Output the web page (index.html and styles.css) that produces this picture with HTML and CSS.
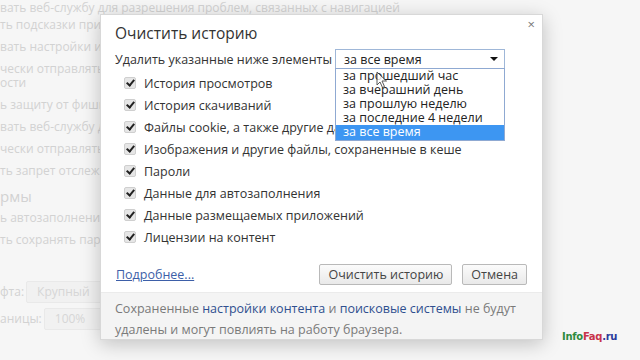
FILE: index.html
```html
<!DOCTYPE html>
<html lang="ru">

<head>
    <meta charset="UTF-8">
    <meta name="viewport" content="width=device-width, initial-scale=1.0">
    <title>Очистить историю</title>
    <link rel="stylesheet" href="styles.css">
</head>

<body>
    <!-- Settings page behind the overlay -->
    <div class="settings">
        <div class="set-line first">вать веб-службу для разрешения проблем, связанных с навигацией</div>
        <div class="set-line">ть подсказки при вводе</div>
        <div class="set-line">вать настройки и службы</div>
        <div class="set-line">чески отправлять статистику<br>ости</div>
        <div class="set-line">ь защиту от фишинга</div>
        <div class="set-line">вать веб-службу для</div>
        <div class="set-line">чески отправлять</div>
        <div class="set-line">ть запрет отслеживания</div>
        <div class="set-heading">рмы</div>
        <div class="set-line">ь автозаполнение</div>
        <div class="set-line">ть сохранять пароли</div>
        <div class="set-field first-field">
            <span>фта:</span>
            <span class="fake-select wide">Крупный</span>
        </div>
        <div class="set-field">
            <span>аницы:</span>
            <span class="fake-select">100%</span>
        </div>
    </div>

    <!-- Dialog -->
    <div class="dialog">
        <span class="close">&#215;</span>
        <div class="dialog-body">
            <h1>Очистить историю</h1>
            <div class="period-row">
                <span>Удалить указанные ниже элементы</span>
                <div class="period">
                    <div class="period-value">
                        <span>за все время</span>
                        <span class="arrow"></span>
                    </div>
                    <ul class="period-list">
                        <li>за прошедший час</li>
                        <li>за вчерашний день</li>
                        <li>за прошлую неделю</li>
                        <li>за последние 4 недели</li>
                        <li class="active">за все время</li>
                    </ul>
                </div>
            </div>

            <ul class="items">
                <li><span class="check"></span>История просмотров</li>
                <li><span class="check"></span>История скачиваний</li>
                <li><span class="check"></span>Файлы cookie, а также другие данные сайтов и плагинов</li>
                <li><span class="check"></span>Изображения и другие файлы, сохраненные в кеше</li>
                <li><span class="check"></span>Пароли</li>
                <li><span class="check"></span>Данные для автозаполнения</li>
                <li><span class="check"></span>Данные размещаемых приложений</li>
                <li><span class="check"></span>Лицензии на контент</li>
            </ul>

            <div class="actions">
                <a href="#" class="more">Подробнее...</a>
                <button class="btn">Очистить историю</button>
                <button class="btn">Отмена</button>
            </div>
        </div>
        <div class="dialog-footer">
            Сохраненные <a href="#">настройки контента</a> и <a href="#">поисковые системы</a> не будут
            удалены и могут повлиять на работу браузера.
        </div>
    </div>

    <!-- Mouse pointer -->
    <svg class="cursor" width="12" height="18" viewBox="0 0 12 18">
        <path d="M1 1 L1 14 L4 11 L6.5 16.5 L8.5 15.5 L6 10 L10.5 10 Z" fill="#fff" stroke="#333" stroke-width="1"
            stroke-linejoin="round" />
    </svg>

    <div class="watermark"><span class="wm-info">Info</span><span class="wm-faq">Faq</span><span class="wm-ru">.ru</span></div>
</body>

</html>
```

FILE: styles.css
```css
body {
    font-family: "Open Sans", "Noto Sans", sans-serif;
    background: #f6f6f6;
    margin: 0;
    padding: 0;
    width: 640px;
    height: 360px;
    overflow: hidden;
    position: relative;
}

/* Background settings page */
.settings {
    padding-top: 1px;
    color: #d2d2d2;
    font-size: 12px;
    line-height: 14px;
    white-space: nowrap;
}

.set-line {
    margin-bottom: 8px;
}

.set-line.first {
    margin-bottom: 3px;
}

.set-heading {
    font-size: 15px;
    line-height: 18px;
    margin-top: 9px;
    margin-bottom: 6px;
}

.set-field {
    display: flex;
    align-items: center;
    gap: 2px;
    height: 22px;
    margin-top: 5px;
}

.set-field.first-field {
    margin-top: 34px;
}

.fake-select {
    display: inline-block;
    width: 52px;
    height: 20px;
    line-height: 20px;
    padding-left: 10px;
    background: #f1f1f1;
    border: 1px solid #e9e9e9;
    border-radius: 2px;
    color: #d6d6d6;
}

.fake-select.wide {
    width: 70px;
}

/* Dialog */
.dialog {
    position: absolute;
    left: 100px;
    top: 14px;
    width: 443px;
    height: 326px;
    background: #fff;
    border: 1px solid #d8d8d8;
    box-sizing: border-box;
    box-shadow: 0 4px 18px rgba(0, 0, 0, 0.22);
    display: flex;
    flex-direction: column;
    color: #333;
}

.close {
    position: absolute;
    right: 7px;
    top: 0;
    font-size: 13px;
    color: #777;
}

.dialog-body {
    flex: 1;
    padding: 8px 15px 0 14px;
}

h1 {
    margin: 0;
    font-size: 15.5px;
    font-weight: normal;
    line-height: 20px;
    color: #333;
}

.period-row {
    display: flex;
    align-items: center;
    margin-top: 6px;
    font-size: 12.5px;
    height: 20px;
}

.period {
    position: relative;
    margin-left: auto;
    margin-right: 22px;
    width: 170px;
}

.period-value {
    display: flex;
    align-items: center;
    justify-content: space-between;
    height: 20px;
    box-sizing: border-box;
    padding: 0 6px 0 8px;
    border: 1px solid #9fb7d8;
    background: #fff;
    color: #222;
}

.arrow {
    width: 0;
    height: 0;
    border-left: 4px solid transparent;
    border-right: 4px solid transparent;
    border-top: 4px solid #111;
}

.period-list {
    position: absolute;
    left: 0;
    top: 19px;
    width: 100%;
    box-sizing: border-box;
    margin: 0;
    padding: 0;
    list-style: none;
    background: #fff;
    border: 1px solid #8fa9d2;
    color: #222;
    z-index: 2;
}

.period-list li {
    height: 14px;
    line-height: 14px;
    padding-left: 7px;
}

.period-list li.active {
    background: #3d96f2;
    color: #fff;
    height: 15px;
}

.items {
    list-style: none;
    margin: 3px 0 0 0;
    padding: 0;
    font-size: 12.5px;
}

.items li {
    display: flex;
    align-items: center;
    height: 22px;
    white-space: nowrap;
    overflow: hidden;
}

.check {
    position: relative;
    width: 10px;
    height: 10px;
    margin: 0 8px 0 9px;
    background: #e6e6e6;
    border: 1px solid #cfcfcf;
    border-radius: 2px;
    flex-shrink: 0;
}

.check::after {
    content: "";
    position: absolute;
    left: 3px;
    top: 0px;
    width: 3px;
    height: 6px;
    border-right: 2px solid #222;
    border-bottom: 2px solid #222;
    transform: rotate(40deg);
}

.actions {
    display: flex;
    align-items: center;
    margin-top: 16px;
    gap: 10px;
}

.more {
    color: #3d5fa8;
    font-size: 12.5px;
    margin-right: auto;
    margin-left: 1px;
}

.btn {
    font-family: inherit;
    font-size: 12.5px;
    color: #444;
    height: 21px;
    padding: 0 8px;
    background: linear-gradient(#fbfbfb, #e9e9e9);
    border: 1px solid #b9b9b9;
    border-radius: 2px;
}

.dialog-footer {
    height: 47px;
    box-sizing: border-box;
    padding: 5px 15px 0 14px;
    background: #f4f4f4;
    border-top: 1px solid #ebebeb;
    color: #7a7a7a;
    font-size: 12.5px;
    line-height: 21px;
}

.dialog-footer a {
    color: #2f4f8f;
    text-decoration: none;
}

/* Pointer and watermark */
.cursor {
    position: absolute;
    left: 376px;
    top: 71px;
    z-index: 5;
    opacity: 0.8;
}

.watermark {
    position: absolute;
    left: 562px;
    top: 331px;
    font-family: "DejaVu Sans", sans-serif;
    font-weight: bold;
    font-size: 10px;
    letter-spacing: -0.3px;
}

.wm-info {
    color: #2e8b3e;
}

.wm-faq {
    color: #c8334a;
}

.wm-ru {
    color: #2b3b9b;
}
```
